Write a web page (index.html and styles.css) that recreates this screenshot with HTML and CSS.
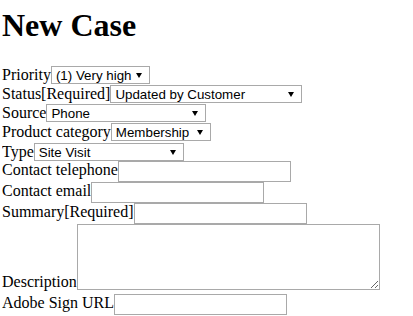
FILE: index.html
```html
<!DOCTYPE html>
<html lang="en">
<head>
    <meta charset="UTF-8">
    <title>New Case</title>
    <link rel="stylesheet" href="styles.css">
</head>
<body>
    <h1>New Case</h1>
    <form id="new-case">
        <div class="field">
            <label for="priority">Priority</label><span class="select-wrap"><select id="priority" class="w-priority">
                <option>(1) Very high</option>
            </select></span>
        </div>
        <div class="field">
            <label for="status">Status[Required]</label><span class="select-wrap"><select id="status" class="w-status">
                <option>Updated by Customer</option>
            </select></span>
        </div>
        <div class="field">
            <label for="source">Source</label><span class="select-wrap"><select id="source" class="w-source">
                <option>Phone</option>
            </select></span>
        </div>
        <div class="field field-gap">
            <label for="category">Product category</label><span class="select-wrap"><select id="category" class="w-category">
                <option>Membership</option>
            </select></span>
        </div>
        <div class="field field-last">
            <label for="type">Type</label><span class="select-wrap"><select id="type" class="w-type">
                <option>Site Visit</option>
            </select></span>
        </div>
        <div class="field field-input">
            <label for="telephone">Contact telephone</label><input type="text" id="telephone">
        </div>
        <div class="field field-input">
            <label for="email">Contact email</label><input type="text" id="email">
        </div>
        <div class="field field-input">
            <label for="summary">Summary[Required]</label><input type="text" id="summary">
        </div>
        <div class="field field-area">
            <label for="description">Description</label><textarea id="description"></textarea>
        </div>
        <div class="field field-input">
            <label for="sign-url">Adobe Sign URL</label><input type="text" id="sign-url">
        </div>
    </form>
</body>
</html>
```

FILE: styles.css
```css
body {
    font-family: "Liberation Serif", serif;
    font-size: 16px;
    margin: 7px 2px;
    color: #000;
}

h1 {
    font-size: 32px;
    margin: 0 0 22px 0;
}

.field {
    display: flex;
    align-items: flex-start;
    height: 19px;
}

.field-gap {
    height: 20px;
}

.field-last {
    height: 18px;
}

.field-input {
    height: 21px;
}

.field-area {
    height: 70px;
    align-items: flex-end;
}

.field-area label {
    margin-bottom: 3px;
}

.field-area textarea {
    margin-bottom: 4px;
}

select,
input,
textarea {
    font-family: "Liberation Sans", Arial, sans-serif;
    font-size: 13.33px;
    color: #000;
    background: #fff;
    border: 1px solid #a9a9a9;
    border-radius: 0;
    box-sizing: border-box;
    margin: 0;
}

.select-wrap {
    position: relative;
    display: block;
}

/* windows style drop arrow */
.select-wrap::after {
    content: "";
    position: absolute;
    right: 8px;
    top: 7px;
    border-left: 3px solid transparent;
    border-right: 3px solid transparent;
    border-top: 5px solid #000;
    pointer-events: none;
}

select {
    -webkit-appearance: none;
    appearance: none;
    display: block;
    height: 18px;
    padding: 0 0 0 4px;
}

.w-priority { width: 99px; }
.w-status { width: 192px; }
.w-source { width: 160px; }
.w-category { width: 100px; }
.w-type { width: 150px; }

input[type="text"] {
    width: 173px;
    height: 21px;
    padding: 1px 2px;
}

textarea {
    width: 303px;
    height: 66px;
    padding: 2px;
}
```
